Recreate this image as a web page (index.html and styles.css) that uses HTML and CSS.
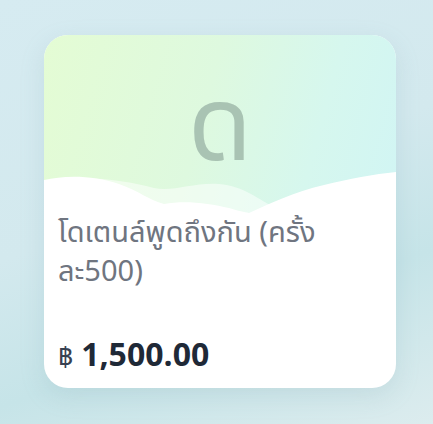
FILE: index.html
```html
<!DOCTYPE html>
<html lang="th">
<head>
    <meta charset="UTF-8">
    <meta name="viewport" content="width=device-width, initial-scale=1.0">
    <title>ของขวัญ</title>
    <link rel="stylesheet" href="styles.css">
</head>
<body>
    <div class="page">
        <div class="gift-card">
            <div class="gift-cover">
                <span class="gift-initial">ด</span>
                <svg class="gift-wave" viewBox="0 0 352 45" preserveAspectRatio="none">
                    <path d="M0 12 C40 4 80 10 110 18 C130 22 150 12 175 14 C200 16 215 30 232 38 C255 24 290 10 352 4 L352 45 L0 45 Z" fill="rgba(255,255,255,0.5)"/>
                    <path d="M0 10 C20 5 50 5 75 14 C95 21 105 30 120 34 C140 30 165 33 185 38 C195 41 200 42 205 43 C225 34 250 22 280 15 C305 9 330 4 352 2 L352 45 L0 45 Z" fill="#ffffff"/>
                </svg>
            </div>
            <div class="gift-body">
                <p class="gift-title">โดเตนล์พูดถึงกัน (ครั้งละ500)</p>
                <p class="gift-price"><span class="currency">฿</span>1,500.00</p>
            </div>
        </div>
    </div>
</body>
</html>
```

FILE: styles.css
```css
html, body {
    margin: 0;
    height: 100%;
}
body {
    font-family: "Noto Sans Thai", "Noto Sans", sans-serif;
    background: linear-gradient(160deg, #d6ebf1 0%, #d3e9ee 45%, #c6e4e8 70%, #dcecee 100%);
}
.page {
    padding: 35px 37px 36px 44px;
}
.gift-card {
    width: 352px;
    height: 353px;
    border-radius: 24px;
    overflow: hidden;
    background: #ffffff;
    box-shadow: 0 8px 24px rgba(120, 160, 170, 0.18);
    display: flex;
    flex-direction: column;
}
.gift-cover {
    position: relative;
    height: 180px;
    flex-shrink: 0;
    background: linear-gradient(105deg, #e4fcd4 0%, #def9df 45%, #d6f7ee 75%, #d1f5f4 100%);
    display: flex;
    justify-content: center;
}
.gift-initial {
    font-size: 104px;
    line-height: 1;
    margin-top: 42px;
    color: #a9c3b3;
}
.gift-wave {
    position: absolute;
    left: 0;
    bottom: 0;
    width: 100%;
    height: 45px;
}
.gift-body {
    flex: 1;
    display: flex;
    flex-direction: column;
    justify-content: space-between;
    padding: 0 30px 8px 14px;
}
.gift-title {
    margin: -1px 0 0;
    font-size: 29px;
    line-height: 39px;
    color: #6f7580;
}
.gift-price {
    margin: 0;
    font-size: 32px;
    font-weight: 700;
    color: #1f2937;
    display: flex;
    align-items: baseline;
    gap: 8px;
}
.currency {
    font-size: 26px;
    font-weight: 400;
    color: #374151;
}
```
